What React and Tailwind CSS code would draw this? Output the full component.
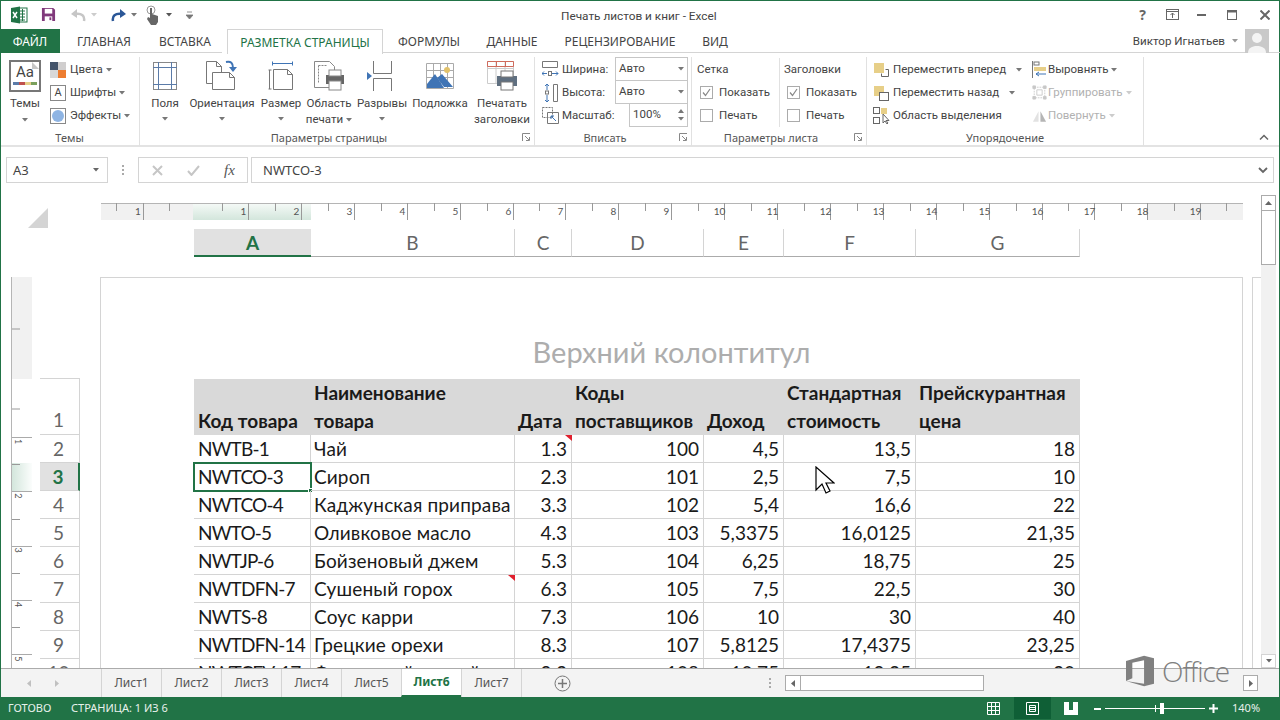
import { Fragment } from 'react';

const Caret = ({ className = '', color = '#777' }) => (
  <svg className={`inline-block ${className}`} width="6" height="4" viewBox="0 0 6 4">
    <path d="M0 0h6L3 3.500z" fill={color} />
  </svg>
);

const Launcher = ({ className = '' }) => (
  <svg className={`absolute bottom-[4px] ${className}`} width="9" height="9" viewBox="0 0 9 9" fill="none" stroke="#888">
    <path d="M.5 8V.5H8M3 3l4 4M4 7.500h3.500V4" />
  </svg>
);

const TAB_ITEMS = [
  ['ГЛАВНАЯ', 'w-[88px]'],
  ['ВСТАВКА', 'w-[74px] mr-[5px]'],
];
const TAB_ITEMS_RIGHT = [
  ['ФОРМУЛЫ', 'w-[92px]'],
  ['ДАННЫЕ', 'w-[74px]'],
  ['РЕЦЕНЗИРОВАНИЕ', 'w-[142px]'],
  ['ВИД', 'w-[48px]'],
];

const TitleBar = () => (
  <div className="relative flex h-[29px] items-center pl-[10px] text-[#444]">
    <svg width="18" height="18" viewBox="0 0 18 18">
      <rect x="8" y="2" width="9" height="14" fill="#fff" stroke="#217346" />
      <path d="M10 5h5M10 8h5M10 11h5M10 14h5M12.500 3v12" stroke="#217346" />
      <path d="M1 2l9-1.500v17L1 16z" fill="#217346" />
      <path d="M3 6l4 6M7 6l-4 6" stroke="#fff" strokeWidth="1.500" />
    </svg>
    <svg className="ml-[13px]" width="15" height="15" viewBox="0 0 16 16">
      <path d="M1 1h12l2 2v12H1z" fill="#80397b" />
      <rect x="4" y="2" width="8" height="5" fill="#fff" />
      <rect x="4" y="10" width="8" height="5" fill="#fff" />
      <rect x="9" y="11" width="2" height="3" fill="#80397b" />
    </svg>
    <svg className="ml-[14px]" width="16" height="14" viewBox="0 0 16 14" fill="none">
      <path d="M14 13c1-5-2-8-9-7" stroke="#c6c6c6" strokeWidth="2.500" />
      <path d="M7 1L1 6l6 4z" fill="#c6c6c6" />
    </svg>
    <Caret className="ml-[5px]" color="#ccc" />
    <svg className="ml-[14px]" width="16" height="14" viewBox="0 0 16 14" fill="none">
      <path d="M2 13C1 8 4 5 11 6" stroke="#2b5797" strokeWidth="2.500" />
      <path d="M9 1l6 5-6 4z" fill="#2b5797" />
    </svg>
    <Caret className="ml-[4px]" />
    <svg className="ml-[8px]" width="16" height="20" viewBox="0 0 16 20">
      <circle cx="6" cy="5" r="4" fill="none" stroke="#999" />
      <path d="M5 3h2v6l6 2v6l-2 3H6L2 14l1-2 2 1z" fill="#666" />
    </svg>
    <Caret className="ml-[5px]" color="#555" />
    <svg className="ml-[14px]" width="7" height="8" viewBox="0 0 7 8">
      <path d="M1 1h5M0 4h7L3.500 8z" stroke="#777" fill="#777" strokeWidth=".8" />
    </svg>
    <div className="absolute left-[561px] top-[7px] font-['Roboto',sans-serif] text-[11.8px] leading-[18px]">Печать листов и книг - Excel</div>
    <div className="ml-auto mr-[10px] flex items-center">
      <span className="mr-[20px] text-[14px] font-bold text-[#666]">?</span>
      <svg className="mr-[18px]" width="13" height="11" viewBox="0 0 13 11" fill="none" stroke="#666">
        <rect x=".5" y=".5" width="12" height="10" />
        <path d="M.5 2.500h12M6.500 9V4M4.500 6l2-2 2 2" />
      </svg>
      <svg className="mr-[21px]" width="9" height="2" viewBox="0 0 9 2"><rect width="9" height="2" fill="#666" /></svg>
      <svg className="mr-[23px]" width="10" height="10" viewBox="0 0 10 10" fill="none" stroke="#666">
        <rect x=".5" y=".5" width="9" height="9" />
        <path d="M0 1.500h10" strokeWidth="2" />
      </svg>
      <svg width="10" height="10" viewBox="0 0 10 10" stroke="#666" strokeWidth="2">
        <path d="M.500 .5l9 9M9.500 .5l-9 9" />
      </svg>
    </div>
  </div>
);

const TabRow = () => (
  <div className="relative z-10 flex h-[24px] text-[12px] text-[#444]">
    <div className="flex w-[60px] items-center justify-center bg-[#217346] pt-[2px] text-white">ФАЙЛ</div>
    {TAB_ITEMS.map(([t, w]) => (
      <div key={t} className={`flex items-center justify-center border-b border-[#d4d4d4] pt-[2px] ${w}`}>{t}</div>
    ))}
    <div className="flex h-[25px] w-[156px] items-center justify-center border-x border-t border-[#d4d4d4] bg-white pt-[1px] text-[#217346]">
      РАЗМЕТКА СТРАНИЦЫ
    </div>
    {TAB_ITEMS_RIGHT.map(([t, w]) => (
      <div key={t} className={`flex items-center justify-center border-b border-[#d4d4d4] pt-[2px] ${w}`}>{t}</div>
    ))}
    <div className="flex flex-1 items-center justify-end border-b border-[#d4d4d4] pr-[11px]">
      <span className="pt-[2px] font-['Roboto',sans-serif] text-[11.6px]">Виктор Игнатьев</span>
      <Caret className="ml-[7px] mr-[7px]" color="#999" />
      <div className="flex h-[24px] w-[24px] items-end justify-center overflow-hidden bg-[#c9c9c9]">
        <svg width="24" height="24" viewBox="0 0 24 24">
          <circle cx="12" cy="9" r="5" fill="#f4f4f4" />
          <path d="M3 24c0-5 4-7 9-7s9 2 9 7z" fill="#f4f4f4" />
        </svg>
      </div>
    </div>
  </div>
);

const Group = ({ label, className, launcher, children }) => (
  <div className={`relative flex h-[89px] shrink-0 flex-col border-r border-[#e1e1e1] ${className}`}>
    <div className="h-[73px]">{children}</div>
    <div className={`text-center font-['Noto_Sans',sans-serif] text-[11px] leading-[16px] text-[#555] ${launcher ? 'pr-[16px]' : ''}`}>{label}</div>
    {launcher && <Launcher className="right-[3px]" />}
  </div>
);

const Big = ({ icon, lines, caret, className }) => (
  <div className={`flex shrink-0 flex-col items-center ${className}`}>
    <div className="flex h-[38px] items-center justify-center">{icon}</div>
    <div className="text-center leading-[16px] whitespace-nowrap">
      {lines[0]}
      <br />
      {lines[1]}
      {caret === 'inline' && <Caret className="ml-[3px]" />}
      {caret === 'below' && <Caret className="mb-[1px]" />}
    </div>
  </div>
);

const MarginsIcon = () => (
  <svg width="24" height="28" viewBox="0 0 24 28" fill="none" stroke="#5b7ba8">
    <rect x=".5" y=".5" width="23" height="27" stroke="#888" />
    <path d="M5.500 0v28M18.500 0v28M0 5.500h24M0 22.500h24" />
  </svg>
);
const OrientationIcon = () => (
  <svg width="32" height="32" viewBox="0 0 32 32" fill="none" stroke="#777">
    <path d="M.5 1.500h10l5 5v17H.5zM10.500 1.500v5h5" fill="#fff" />
    <path d="M6.500 12.500h17l5 5v12h-22zM23.500 12.500v5h5" fill="#fff" />
    <path d="M20 2c5-1 7 1 7 6" stroke="#3f74b5" strokeWidth="2" />
    <path d="M23 7h8l-4 5z" fill="#3f74b5" stroke="none" />
  </svg>
);
const SizeIcon = () => (
  <svg width="26" height="30" viewBox="0 0 26 30" fill="none" stroke="#777">
    <path d="M5.500 8.500h14l5 5v15h-19zM19.500 8.500v5h5M1.500 9v19M.5 9h3M.5 28h3" />
    <path d="M4.500 2.500h20M4.500 .5v4M24.500 .5v4" stroke="#3f74b5" />
  </svg>
);
const PrintAreaIcon = () => (
  <svg width="30" height="32" viewBox="0 0 30 32" fill="none" stroke="#888">
    <path d="M.5 1.500h15l5 5v21H.5z" fill="#fff" />
    <path d="M4.500 5.500h9M4.500 5.500v18" strokeDasharray="2 1" />
    <rect x="12" y="15" width="18" height="9" fill="#666" stroke="none" />
    <rect x="15" y="10" width="12" height="6" fill="#fff" />
    <rect x="15" y="21" width="12" height="9" fill="#fff" />
  </svg>
);
const BreaksIcon = () => (
  <svg className="-ml-[4px]" width="26" height="30" viewBox="0 0 26 30" fill="none" stroke="#777">
    <path d="M6.500 0v12.500h18V0M6.500 30V17.500h18V30" />
    <path d="M0 11l5 4-5 4z" fill="#3f74b5" stroke="none" />
  </svg>
);
const WatermarkIcon = () => (
  <svg width="28" height="26" viewBox="0 0 28 26" fill="none" stroke="#aaa">
    <path d="M.5.5h27v25H.5zM7.500 0v26M14.500 0v26M21.500 0v26M0 7.500h28M0 14.500h28" />
    <circle cx="21" cy="7" r="3" fill="#e2c26b" stroke="none" />
    <path d="M1 21l8-10 9 14H1z" fill="#3f74b5" stroke="none" />
    <path d="M11 15l5-4 11 13h-9z" fill="#3f74b5" stroke="none" />
  </svg>
);
const PrintTitlesIcon = () => (
  <svg width="30" height="30" viewBox="0 0 30 30" fill="none" stroke="#ccc">
    <path d="M.5 .5h26v22H.5zM0 7.500h27M9 1v22M18 1v22" />
    <path d="M.5 .5h26v5H.5z" stroke="#cf6b5c" />
    <path d="M9.500 0v6M18.500 0v6" stroke="#cf6b5c" />
    <rect x="10" y="15" width="20" height="10" fill="#5f6f80" stroke="none" />
    <rect x="14" y="10" width="12" height="6" fill="#fff" stroke="#777" />
    <rect x="14" y="21" width="12" height="8" fill="#fff" stroke="#777" />
  </svg>
);

const Small = ({ icon, label, caret, muted, iconClass = 'mr-[2px] w-[18px]', caretClass = 'ml-[3px]' }) => (
  <div className={`flex h-[23px] items-center whitespace-nowrap ${muted ? 'text-[#b1b1b1]' : ''}`}>
    <div className={`flex shrink-0 justify-start ${iconClass}`}>{icon}</div>
    {label}
    {caret && <Caret className={caretClass} color={muted ? '#ccc' : '#777'} />}
  </div>
);

const ColorsIcon = () => (
  <svg width="16" height="16" viewBox="0 0 16 16">
    <rect width="8" height="8" fill="#44546a" />
    <rect x="8" width="8" height="8" fill="#d0cece" />
    <rect y="8" width="8" height="8" fill="#d8d8d8" />
    <rect x="8" y="8" width="8" height="8" fill="#ed7d31" />
  </svg>
);
const FontsIcon = () => (
  <div className="flex h-[16px] w-[16px] items-center justify-center border border-[#888] text-[11px] leading-none">A</div>
);
const EffectsIcon = () => (
  <div className="flex h-[16px] w-[16px] items-center justify-center border border-[#888]">
    <div className="h-[12px] w-[12px] rounded-full bg-[#8eb4e3]" />
  </div>
);
const WidthIcon = () => (
  <svg width="17" height="18" viewBox="0 0 17 18" fill="none" stroke="#777">
    <path d="M.5 .5h15v6H.5z" />
    <path d="M0 12.500h5M10 12.500h6M2 10.500l-2 2 2 2M14 10.500l2 2-2 2" stroke="#3f74b5" />
    <rect x="6.500" y="10.500" width="3" height="4" />
  </svg>
);
const HeightIcon = () => (
  <svg width="17" height="18" viewBox="0 0 17 18" fill="none" stroke="#777">
    <path d="M11.500 .5h4v17h-4z" />
    <path d="M5 0v6M5 11v7M3 2l2-2 2 2M3 16l2 2 2-2" stroke="#3f74b5" />
    <rect x="3.500" y="7" width="3" height="3" />
  </svg>
);
const ScaleIcon = () => (
  <svg width="17" height="17" viewBox="0 0 17 17" fill="none" stroke="#777">
    <path d="M.5 .5h10v10H.5z" strokeDasharray="2 1" />
    <path d="M5.500 5.500h11v11h-11z" />
    <path d="M14 14L9 9M9 12V9h3" stroke="#3f74b5" />
  </svg>
);
const ForwardIcon = () => (
  <svg width="16" height="16" viewBox="0 0 16 16" fill="none">
    <rect x="1" y="1" width="10" height="10" fill="#e7cf88" />
    <path d="M12.500 7.500h3v7h-7v-3" stroke="#666" />
  </svg>
);
const BackwardIcon = () => (
  <svg width="16" height="16" viewBox="0 0 16 16" fill="none">
    <rect x="1" y="1" width="10" height="10" fill="#e7cf88" />
    <rect x="6.500" y="7.500" width="9" height="8" fill="#fff" stroke="#666" />
  </svg>
);
const SelectionIcon = () => (
  <svg width="17" height="17" viewBox="0 0 17 17" fill="none" stroke="#666">
    <rect x=".5" y=".5" width="6" height="6" />
    <rect x=".5" y="10.500" width="6" height="6" />
    <rect x="8" y="1" width="6" height="6" fill="#e7cf88" stroke="none" />
    <path d="M10 7v9l2-2 2 3 1-1-2-2.500h3z" fill="#fff" />
  </svg>
);
const AlignIcon = () => (
  <svg width="16" height="17" viewBox="0 0 16 17" fill="none">
    <path d="M.5 0v17" stroke="#777" />
    <rect x="2" y="1" width="5" height="3" stroke="#777" />
    <rect x="2" y="6" width="12" height="4" fill="#e7cf88" />
    <path d="M14 13H4M7 11l-3 2 3 2" stroke="#3f74b5" />
  </svg>
);
const GroupIcon = () => (
  <svg width="15" height="15" viewBox="0 0 17 17" fill="none" stroke="#c8c8c8">
    <path d="M2.500 2.500h12v12h-12z" strokeDasharray="2 1" />
    <path d="M5.500 5.500h6v6h-6z" />
    <path d="M1 1h3v3H1zM13 1h3v3h-3zM1 13h3v3H1zM13 13h3v3h-3z" fill="#c8c8c8" />
  </svg>
);
const RotateIcon = () => (
  <svg width="15" height="14" viewBox="0 0 16 14">
    <path d="M9 2l6 11H9z" fill="#b5b5b5" />
    <path d="M7 2L1 13h6z" fill="#e2e2e2" />
  </svg>
);

const CheckRow = ({ checked, label }) => (
  <div className="flex h-[23px] items-center">
    <div className="mr-[6px] flex h-[13px] w-[13px] items-center justify-center border border-[#ababab] bg-white">
      {checked && (
        <svg width="11" height="11" viewBox="0 0 11 11" fill="none" stroke="#888" strokeWidth="1.200">
          <path d="M2 5.500l2.500 3L9 2" />
        </svg>
      )}
    </div>
    {label}
  </div>
);

const Dropdown = ({ value, spin }) => (
  <div className={`-mt-[1px] flex h-[24px] items-center justify-between border border-[#c6c6c6] bg-white pl-[3px] pr-[3px] ${spin ? 'w-[59px]' : 'w-[73px]'}`}>
    {value}
    {spin ? (
      <div className="flex flex-col gap-[4px]">
        <svg width="6" height="4" viewBox="0 0 6 4"><path d="M0 4h6L3 0z" fill="#777" /></svg>
        <Caret />
      </div>
    ) : (
      <Caret />
    )}
  </div>
);

const Ribbon = () => (
  <div className="flex h-[94px] border-b-2 border-[#e3e3e3] pt-[4px] font-['Roboto',sans-serif] text-[11.5px] text-[#444]">
    <Group label="Темы" className="w-[140px]">
      <div className="flex pl-[9px]">
        <div className="w-[41px]">
          <div className="relative mt-[3px] flex h-[32px] w-[32px] flex-col items-center border-2 border-[#777] bg-[#fff]">
            <span className="absolute right-0 top-0 border-l-[7px] border-t-[7px] border-l-[#c6c6c6] border-t-white" />
            <div className="text-[15px] leading-[20px]">Aa</div>
            <svg width="24" height="4" viewBox="0 0 24 4">
              <rect width="6" height="3" fill="#5b7ba8" />
              <rect x="6" width="6" height="3" fill="#c0504d" />
              <rect x="12" width="6" height="3" fill="#e7cf88" />
              <rect x="18" width="6" height="3" fill="#7aa05c" />
            </svg>
          </div>
          <div className="mt-[3px] w-[32px] text-center leading-[16px]">
            Темы
            <br />
            <Caret />
          </div>
        </div>
        <div className="pt-[1px]">
          <Small icon={<ColorsIcon />} label="Цвета" caret />
          <Small icon={<FontsIcon />} label="Шрифты" caret />
          <Small icon={<EffectsIcon />} label="Эффекты" caret />
        </div>
      </div>
    </Group>
    <Group label="Параметры страницы" className="w-[395px]" launcher>
      <div className="flex pl-[9px]">
        <Big icon={<MarginsIcon />} lines={['Поля']} caret="below" className="w-[32px]" />
        <Big icon={<OrientationIcon />} lines={['Ориентация']} caret="below" className="ml-[7px] w-[68px]" />
        <Big icon={<SizeIcon />} lines={['Размер']} caret="below" className="ml-[4px] w-[42px]" />
        <Big icon={<PrintAreaIcon />} lines={['Область', 'печати']} caret="inline" className="ml-[4px] w-[46px]" />
        <Big icon={<BreaksIcon />} lines={['Разрывы']} caret="below" className="ml-[5px] w-[50px]" />
        <Big icon={<WatermarkIcon />} lines={['Подложка']} className="ml-[4px] w-[58px]" />
        <Big icon={<PrintTitlesIcon />} lines={['Печатать', 'заголовки']} className="ml-[4px] w-[58px]" />
      </div>
    </Group>
    <Group label="Вписать" className="w-[157px]" launcher>
      <div className="flex pl-[7px] pt-[1px]">
        <div>
          <Small icon={<WidthIcon />} label="Ширина:" />
          <Small icon={<HeightIcon />} label="Высота:" />
          <Small icon={<ScaleIcon />} label="Масштаб:" />
        </div>
        <div className="absolute left-[80px] top-[1px] flex flex-col items-end">
          <Dropdown value="Авто" />
          <Dropdown value="Авто" />
          <Dropdown value="100%" spin />
        </div>
      </div>
    </Group>
    <Group label="Параметры листа" className="w-[175px]" launcher>
      <div className="flex pl-[5px] pt-[1px]">
        <div className="w-[82px]">
          <div className="h-[23px] leading-[23px]">Сетка</div>
          <div className="pl-[3px]">
            <CheckRow checked label="Показать" />
            <CheckRow label="Печать" />
          </div>
        </div>
        <div className="border-l border-[#e1e1e1] pl-[4px]">
          <div className="h-[23px] leading-[23px]">Заголовки</div>
          <div className="pl-[3px]">
            <CheckRow checked label="Показать" />
            <CheckRow label="Печать" />
          </div>
        </div>
      </div>
    </Group>
    <Group label="Упорядочение" className="w-[277px]">
      <div className="flex pl-[6px] pt-[1px]">
        <div className="w-[159px]">
          <Small icon={<ForwardIcon />} label="Переместить вперед" caret caretClass="ml-[10px]" />
          <Small icon={<BackwardIcon />} label="Переместить назад" caret caretClass="ml-[10px]" />
          <Small icon={<SelectionIcon />} label="Область выделения" />
        </div>
        <div>
          <Small icon={<AlignIcon />} label="Выровнять" caret iconClass="w-[16px]" />
          <Small icon={<GroupIcon />} label="Группировать" caret muted iconClass="w-[16px]" />
          <Small icon={<RotateIcon />} label="Повернуть" caret muted iconClass="w-[16px]" />
        </div>
      </div>
    </Group>
    <div className="flex flex-1 items-end justify-end pb-[5px] pr-[11px]">
      <svg width="10" height="6" viewBox="0 0 10 6" fill="none" stroke="#666" strokeWidth="1.500">
        <path d="M1 5.500l4-4 4 4" />
      </svg>
    </div>
  </div>
);

const FormulaBar = () => (
  <div className="mt-[10px] flex h-[26px] pl-[6px] pr-[6px] text-[13px] text-[#444]">
    <div className="flex w-[102px] items-center justify-between border border-[#d4d4d4] pl-[6px] pr-[8px]">
      <span className="pt-[1px]">A3</span>
      <Caret color="#666" />
    </div>
    <div className="flex w-[30px] flex-col items-center justify-center gap-[2px]">
      <span className="h-[2px] w-[2px] bg-[#aaa]" />
      <span className="h-[2px] w-[2px] bg-[#aaa]" />
      <span className="h-[2px] w-[2px] bg-[#aaa]" />
    </div>
    <div className="flex w-[110px] items-center border border-[#d4d4d4] pl-[13px]">
      <svg width="11" height="11" viewBox="0 0 11 11" stroke="#c6c6c6" strokeWidth="2">
        <path d="M1 1l9 9M10 1l-9 9" />
      </svg>
      <svg className="ml-[24px]" width="13" height="11" viewBox="0 0 13 11" fill="none" stroke="#c6c6c6" strokeWidth="2">
        <path d="M1 6l3.500 4L12 1" />
      </svg>
      <span className="ml-[24px] font-['Liberation_Serif',serif] text-[15px] italic text-[#555]">fx</span>
    </div>
    <div className="ml-[3px] flex flex-1 items-center justify-between border border-[#d4d4d4] pl-[11px] pr-[5px]">
      <span className="pt-[1px]">NWTCO-3</span>
      <svg width="10" height="7" viewBox="0 0 10 7" fill="none" stroke="#666" strokeWidth="1.800">
        <path d="M1 1l4 4 4-4" />
      </svg>
    </div>
  </div>
);

const HorizontalRuler = () => {
  const marks = [];
  for (let i = 1; i <= 19; i++) marks.push(i);
  return (
    <svg width="1142" height="18" viewBox="0 0 1142 18" className="block">
      <defs>
        <linearGradient id="sel" x1="0" y1="0" x2="0" y2="1">
          <stop offset="0" stopColor="#f4f9f6" />
          <stop offset="1" stopColor="#d3e6dc" />
        </linearGradient>
      </defs>
      <rect x="0" y="1" width="92" height="16" fill="#f1f1f1" />
      <rect x="92" y="1" width="118" height="16" fill="url(#sel)" />
      <rect x="1047" y="1" width="95" height="16" fill="#f1f1f1" />
      <path d="M0 .5h1142" stroke="#b5b5b5" />
      <path d="M15.500 0v8M42.500 0v17M68.500 0v8" stroke="#999" />
      <text x="37" y="12" textAnchor="middle" fontSize="10" fill="#555">1</text>
      {marks.map((n) => {
        const x = Math.round(147 + (n - 1) * 52.9) + 0.5;
        return (
          <Fragment key={n}>
            <path d={`M${x} 0v17M${x - 26} 0v8`} stroke="#999" />
            <text x={x - 5} y="12" textAnchor="middle" fontSize="10" fill="#555">{n}</text>
          </Fragment>
        );
      })}
      <path d="M1125.500 0v8" stroke="#999" />
    </svg>
  );
};

const VerticalRuler = () => {
  const labels = [1, 2, 3, 4, 5];
  return (
    <svg width="21" height="391" viewBox="0 0 21 391" className="block">
      <defs>
        <linearGradient id="selv" x1="0" y1="0" x2="1" y2="0">
          <stop offset="0" stopColor="#d3e6dc" />
          <stop offset="1" stopColor="#fbfdfc" />
        </linearGradient>
      </defs>
      <rect x="1" y="0" width="20" height="102" fill="#f1f1f1" />
      <rect x="1" y="186" width="20" height="28" fill="url(#selv)" />
      <path d="M.5 0v391" stroke="#b5b5b5" />
      <path d="M1 52h8" stroke="#999" />
      <path d="M1 132h8" stroke="#999" />
      {labels.map((n) => {
        const y = 160 + (n - 1) * 54.3;
        return (
          <Fragment key={n}>
            <path d={`M1 ${Math.round(y) + 0.5}h20`} stroke="#aaa" />
            {n > 1 && <path d={`M1 ${Math.round(y - 27) + 0.5}h8`} stroke="#999" />}
            <text x="4" y={y + 10} fontSize="9" fill="#555" transform={`rotate(90 8 ${y + 6})`}>{n}</text>
          </Fragment>
        );
      })}
    </svg>
  );
};

const COLS = [
  ['A', 'w-[117px]'],
  ['B', 'w-[204px]'],
  ['C', 'w-[57px]'],
  ['D', 'w-[132px]'],
  ['E', 'w-[80px]'],
  ['F', 'w-[132px]'],
  ['G', 'w-[164px]'],
];

const ROWS = [
  ['NWTB-1', 'Чай', '1.3', '100', '4,5', '13,5', '18'],
  ['NWTCO-3', 'Сироп', '2.3', '101', '2,5', '7,5', '10'],
  ['NWTCO-4', 'Каджунская приправа', '3.3', '102', '5,4', '16,6', '22'],
  ['NWTO-5', 'Оливковое масло', '4.3', '103', '5,3375', '16,0125', '21,35'],
  ['NWTJP-6', 'Бойзеновый джем', '5.3', '104', '6,25', '18,75', '25'],
  ['NWTDFN-7', 'Сушеный горох', '6.3', '105', '7,5', '22,5', '30'],
  ['NWTS-8', 'Соус карри', '7.3', '106', '10', '30', '40'],
  ['NWTDFN-14', 'Грецкие орехи', '8.3', '107', '5,8125', '17,4375', '23,25'],
  ['NWTCFV-17', 'Фруктовый коктейль', '9.3', '108', '10,75', '19,25', '30'],
];

const HEADS = ['Код товара', ['Наименование', 'товара'], 'Дата', ['Коды', 'поставщиков'], 'Доход', ['Стандартная', 'стоимость'], ['Прейскурантная', 'цена']];

const CELL_FONT = "font-['Lato','Carlito','Open_Sans',sans-serif]";

const cellClass = (c) => {
  if (c === 0) return 'pl-[4px] tracking-[-0.8px]';
  if (c === 1) return 'pl-[3px] tracking-[0.15px]';
  return 'pr-[4px] text-right';
};

const SheetTable = () => (
  <div className="grid w-[886px] grid-cols-[117px_204px_57px_132px_80px_132px_164px] text-[19px] leading-[28px] text-[#1a1a1a]">
    {HEADS.map((h, i) => (
      <div key={i} className={`flex h-[56px] items-end whitespace-nowrap bg-[#d9d9d9] font-bold ${i === 0 ? 'pl-[4px]' : 'pl-[3px]'}`}>
        <div>
          {Array.isArray(h) ? (
            <>
              {h[0]}
              <br />
              {h[1]}
            </>
          ) : (
            h
          )}
        </div>
      </div>
    ))}
    {ROWS.map((row, r) =>
      row.map((val, c) => (
        <div
          key={`${r}-${c}`}
          className={`relative h-[28px] whitespace-nowrap border-r border-b border-[#d4d4d4] ${cellClass(c)}`}
        >
          {val}
          {r === 0 && c === 2 && <span className="absolute -right-[1px] top-0 border-l-[7px] border-t-[6px] border-l-transparent border-t-[#e0202e]" />}
          {r === 5 && c === 1 && <span className="absolute -right-[1px] top-0 border-l-[7px] border-t-[6px] border-l-transparent border-t-[#e0202e]" />}
          {r === 1 && c === 0 && (
            <>
              <span className="absolute -left-[1px] -top-[1px] h-[30px] w-[119px] border-2 border-[#217346]" />
              <span className="absolute -right-[3px] -bottom-[3px] h-[5px] w-[5px] border border-white bg-[#217346]" />
            </>
          )}
        </div>
      ))
    )}
  </div>
);

const RowHeads = () => (
  <div className="w-[40px] border-t border-r border-[#d4d4d4] text-[19px] leading-[28px] text-[#666]">
    <div className="flex h-[56px] items-end justify-center border-b border-[#d4d4d4] pr-[2px]">1</div>
    {[2, 3, 4, 5, 6, 7, 8, 9, 10].map((n) => (
      <div
        key={n}
        className={`h-[28px] border-b border-[#d4d4d4] pr-[2px] text-center ${n === 3 ? '-mr-[1px] border-r-2 border-r-[#217346] bg-[#e1e1e1] font-bold text-[#217346]' : ''}`}
      >
        {n}
      </div>
    ))}
  </div>
);

const Sheet = () => (
  <div className={`relative flex h-[482px] overflow-hidden ${CELL_FONT}`}>
    <div className="w-[100px] shrink-0 pt-[22px]">
      <svg className="ml-[28px]" width="20" height="20" viewBox="0 0 20 20"><path d="M20 0v20H0z" fill="#d4d4d4" /></svg>
      <div className="ml-[11px] mt-[49px] flex h-[391px] items-start">
        <VerticalRuler />
        <div className="ml-[8px] mt-[101px]"><RowHeads /></div>
      </div>
    </div>
    <div className="w-[1143px] shrink-0 pt-[17px]">
      <div className="ml-[1px]"><HorizontalRuler /></div>
      <div className="ml-[94px] mt-[8px] flex h-[28px] text-[19px] leading-[28px] text-[#666]">
        {COLS.map(([c, w]) => (
          <div
            key={c}
            className={`border-b text-center ${w} ${c === 'A' ? 'border-b-2 border-[#217346] bg-[#e1e1e1] font-bold text-[#217346]' : 'border-r border-r-[#d4d4d4] border-b-[#ababab]'}`}
          >
            {c}
          </div>
        ))}
      </div>
      <div className="mt-[20px] h-[400px] border-x border-t border-[#d4d4d4] pl-[93px] pt-[101px]">
        <div className="absolute left-[100px] top-[149px] w-[1143px] text-center text-[29px] leading-[34px] text-[#adadad]">
          Верхний колонтитул
        </div>
        <SheetTable />
      </div>
    </div>
    <div className="ml-[9px] mt-[91px] w-[9px] shrink-0 border-l border-t border-[#d4d4d4]" />
    <div className="flex w-[15px] shrink-0 flex-col pt-[9px]">
      <div className="flex h-[70px] flex-col items-center border border-[#ababab] bg-white">
        <div className="flex h-[15px] w-full items-center justify-center border-b border-[#ababab]">
          <svg width="7" height="4" viewBox="0 0 7 4"><path d="M0 4h7L3.500 0z" fill="#666" /></svg>
        </div>
      </div>
      <div className="flex-1 bg-[#f1f1f1]" />
      <div className="flex h-[14px] items-center justify-center border border-[#d4d4d4] bg-white">
        <Caret color="#666" />
      </div>
    </div>
  </div>
);

const SHEET_TABS = ['Лист1', 'Лист2', 'Лист3', 'Лист4', 'Лист5', 'Лист6', 'Лист7'];

const SheetTabs = () => (
  <div className="flex h-[29px] items-center border-t border-[#ababab] bg-[#f3f3f3] font-['Noto_Sans',sans-serif] text-[12px] text-[#555]">
    <div className="flex w-[101px] items-center pl-[27px]">
      <svg width="4" height="7" viewBox="0 0 4 7"><path d="M4 0v7L0 3.500z" fill="#c0c0c0" /></svg>
      <svg className="ml-[24px]" width="4" height="7" viewBox="0 0 4 7"><path d="M0 0v7l4-3.500z" fill="#c0c0c0" /></svg>
    </div>
    <div className="flex h-[28px]">
      {SHEET_TABS.map((t) => (
        <div
          key={t}
          className={`flex w-[60px] items-center justify-center border-l border-[#d4d4d4] ${t === 'Лист6' ? 'border-b-2 border-b-[#217346] bg-white font-bold text-[#217346]' : ''}`}
        >
          {t}
        </div>
      ))}
    </div>
    <div className="h-[28px] border-l border-[#d4d4d4]" />
    <svg className="ml-[32px]" width="17" height="17" viewBox="0 0 17 17" fill="none" stroke="#777">
      <circle cx="8.500" cy="8.500" r="7.500" />
      <path d="M8.500 4v9M4 8.500h9" strokeWidth="1.500" />
    </svg>
    <div className="ml-[198px] flex flex-col gap-[2px]">
      <span className="h-[2px] w-[2px] bg-[#aaa]" />
      <span className="h-[2px] w-[2px] bg-[#aaa]" />
      <span className="h-[2px] w-[2px] bg-[#aaa]" />
    </div>
    <div className="ml-[14px] flex h-[16px] w-[473px] items-stretch">
      <div className="flex w-[16px] items-center justify-center border border-[#ababab] bg-white">
        <svg width="4" height="7" viewBox="0 0 4 7"><path d="M4 0v7L0 3.500z" fill="#666" /></svg>
      </div>
      <div className="w-[183px] border-y border-r border-[#ababab] bg-white" />
      <div className="flex-1" />
      <div className="flex w-[15px] items-center justify-center border border-[#ababab] bg-white">
        <svg width="4" height="7" viewBox="0 0 4 7"><path d="M0 0v7l4-3.500z" fill="#666" /></svg>
      </div>
    </div>
  </div>
);

const StatusBar = () => (
  <div className="flex h-[23px] items-center bg-[#217346] pl-[8px] font-['Noto_Sans',sans-serif] text-[11px] text-[#e8f1ec]">
    <span className="w-[63px]">ГОТОВО</span>
    <span>СТРАНИЦА: 1 ИЗ 6</span>
    <div className="ml-auto flex h-full items-center pr-[21px]">
      <svg width="13" height="13" viewBox="0 0 13 13" fill="none" stroke="#fff">
        <path d="M.5 .5h12v12H.5zM.5 4.500h12M.5 8.500h12M4.500 .5v12M8.500 .5v12" />
      </svg>
      <div className="ml-[14px] flex h-full w-[37px] items-center justify-center bg-[#0f5f36]">
        <svg width="13" height="13" viewBox="0 0 13 13" fill="none" stroke="#fff">
          <path d="M.5 .5h12v12H.5zM3.500 3.500h6v6h-6zM3.500 5.500h6M3.500 7.500h6" />
        </svg>
      </div>
      <svg className="ml-[13px]" width="14" height="13" viewBox="0 0 14 13">
        <path d="M0 0h14v13H0z" fill="#fff" />
        <path d="M5 0h4v8H5z" fill="#217346" />
      </svg>
      <div className="ml-[16px] h-[2px] w-[7px] bg-white" />
      <div className="relative ml-[4px] h-[1px] w-[100px] bg-white">
        <div className="absolute left-[50px] -top-[3px] h-[7px] w-[1px] bg-white" />
        <div className="absolute left-[55px] -top-[5px] h-[11px] w-[4px] bg-white" />
      </div>
      <svg className="ml-[4px]" width="9" height="9" viewBox="0 0 9 9"><path d="M3.500 0h2v3.500H9v2H5.500V9h-2V5.500H0v-2h3.500z" fill="#fff" /></svg>
      <span className="ml-[14px] w-[27px]">140%</span>
    </div>
  </div>
);

const OfficeLogo = () => (
  <div className="absolute left-[1126px] top-[654px] flex items-center text-[#808080]">
    <svg width="28" height="34" viewBox="0 0 31 34">
      <path d="M0 6L20 0l11 3v28l-11 3L0 28l20 3V5L7 8v17l-7 3z" fill="#808080" />
    </svg>
    <span className="ml-[8px] font-['Open_Sans',sans-serif] text-[28px] font-light leading-[34px] tracking-[-1px]">Office</span>
  </div>
);

const Cursor = () => (
  <svg className="absolute left-[815px] top-[466px]" width="20" height="29" viewBox="0 0 20 29">
    <path d="M1 1v23l6-6 4 9 4-2-4-8h8z" fill="#fff" stroke="#000" strokeWidth="1.200" />
  </svg>
);

export default function App() {
  return (
    <div className="relative h-[720px] w-[1280px] overflow-hidden bg-white font-['Noto_Sans',sans-serif]">
      <TitleBar />
      <TabRow />
      <Ribbon />
      <FormulaBar />
      <div className="mt-[3px]"><Sheet /></div>
      <SheetTabs />
      <StatusBar />
      <OfficeLogo />
      <Cursor />
      <div className="pointer-events-none absolute inset-0 border border-[#217346]" />
    </div>
  );
}
